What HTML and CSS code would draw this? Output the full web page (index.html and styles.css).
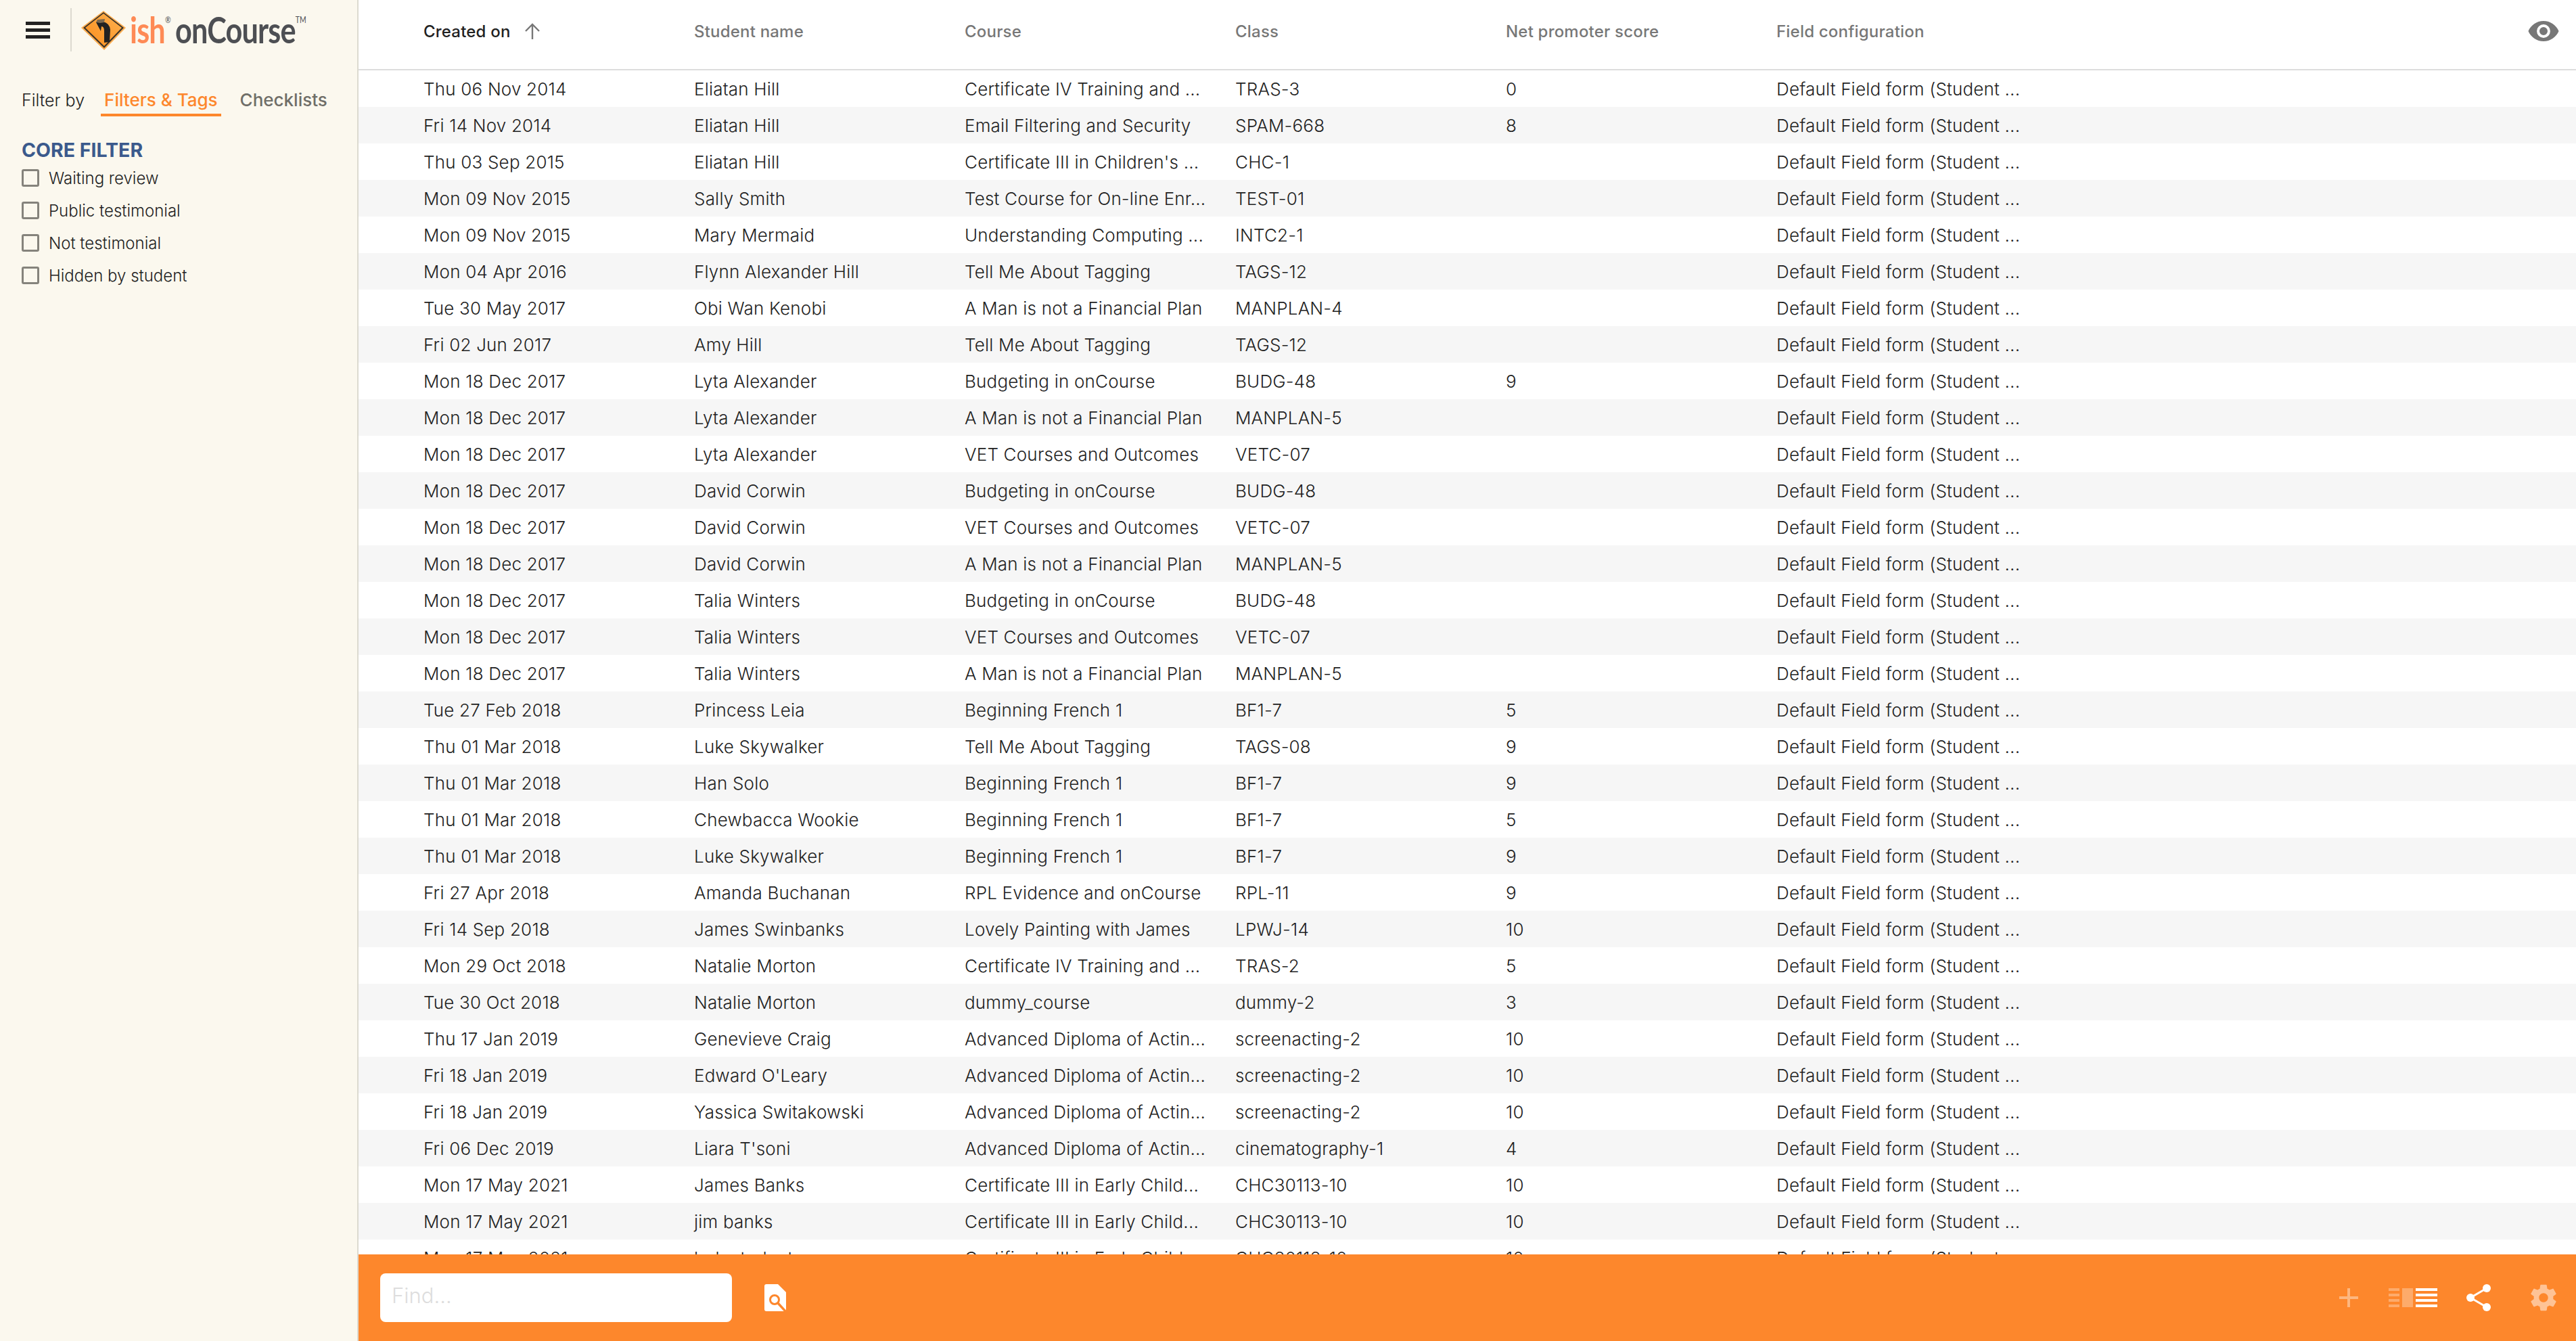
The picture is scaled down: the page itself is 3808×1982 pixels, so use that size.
FILE: index.html
```html
<!DOCTYPE html>
<html lang="en">
<head>
    <meta charset="UTF-8">
    <title>ish onCourse - Survey results</title>
    <link rel="stylesheet" href="styles.css">
</head>
<body>
    <aside class="sidebar">
        <div class="brand">
            <div class="burger"><span></span><span></span><span></span></div>
            <div class="brand-line"></div>
            <svg class="sign" viewBox="0 0 66 58">
                <defs>
                    <linearGradient id="signFill" x1="0" y1="1" x2="1" y2="0">
                        <stop offset="0" stop-color="#fb8f1e"/>
                        <stop offset="1" stop-color="#fdb04e"/>
                    </linearGradient>
                </defs>
                <path d="M33 0 L66 25 L34 58 L0 25 Z" fill="#fdae52"/>
                <path d="M33 2 L63 25 L34 55 L3 25 Z" fill="#3b3328"/>
                <path d="M33 4 L60 25 L34 52 L6 25 Z" fill="url(#signFill)"/>
                <path d="M22 17 L29 30 L30 23 Q34 23 34 30 L34 47 L42 46 L43 28 Q42 18 32 16 Z" fill="#222"/>
                <path d="M22 17 L24 13 L35 12 L34 17 L28 18 Z" fill="#7d6a50"/>
            </svg>
            <div class="wordmark">
                <span class="word-ish">ish</span><sup class="word-reg">®</sup>
                <span class="word-course">onCourse</span><sup class="word-tm">TM</sup>
            </div>
        </div>
        <div class="filter-tabs">
            <span class="filter-label">Filter by</span>
            <span class="tab tab-active">Filters &amp; Tags</span>
            <span class="tab">Checklists</span>
        </div>
        <div class="core-filter">
            <h2>CORE FILTER</h2>
            <label class="check"><i></i>Waiting review</label>
            <label class="check"><i></i>Public testimonial</label>
            <label class="check"><i></i>Not testimonial</label>
            <label class="check"><i></i>Hidden by student</label>
        </div>
    </aside>

    <main class="content">
        <div class="table-head row">
            <div class="cell sorted">Created on
                <svg class="sort-arrow" viewBox="0 0 24 24"><path d="M12 24 V2 M2 12 L12 2 L22 12" fill="none" stroke="#777" stroke-width="2.4"/></svg>
            </div>
            <div class="cell">Student name</div>
            <div class="cell">Course</div>
            <div class="cell">Class</div>
            <div class="cell">Net promoter score</div>
            <div class="cell">Field configuration</div>
            <svg class="eye" viewBox="0 0 24 16"><path fill-rule="evenodd" d="M12 0C6.5 0 2 3.300 0 8c2 4.700 6.500 8 12 8s10-3.300 12-8c-2-4.700-6.500-8-12-8zm0 13.300A5.300 5.300 0 1 1 12 2.700a5.300 5.300 0 0 1 0 10.600zM12 4.800a3.200 3.200 0 1 0 0 6.400 3.200 3.200 0 0 0 0-6.400z" fill="#777"/></svg>
        </div>

        <div class="table-body">
            <div class="row"><div class="cell">Thu 06 Nov 2014</div><div class="cell">Eliatan Hill</div><div class="cell">Certificate IV Training and ...</div><div class="cell">TRAS-3</div><div class="cell">0</div><div class="cell">Default Field form (Student ...</div></div>
            <div class="row"><div class="cell">Fri 14 Nov 2014</div><div class="cell">Eliatan Hill</div><div class="cell">Email Filtering and Security</div><div class="cell">SPAM-668</div><div class="cell">8</div><div class="cell">Default Field form (Student ...</div></div>
            <div class="row"><div class="cell">Thu 03 Sep 2015</div><div class="cell">Eliatan Hill</div><div class="cell">Certificate III in Children's ...</div><div class="cell">CHC-1</div><div class="cell"></div><div class="cell">Default Field form (Student ...</div></div>
            <div class="row"><div class="cell">Mon 09 Nov 2015</div><div class="cell">Sally Smith</div><div class="cell">Test Course for On-line Enr...</div><div class="cell">TEST-01</div><div class="cell"></div><div class="cell">Default Field form (Student ...</div></div>
            <div class="row"><div class="cell">Mon 09 Nov 2015</div><div class="cell">Mary Mermaid</div><div class="cell">Understanding Computing ...</div><div class="cell">INTC2-1</div><div class="cell"></div><div class="cell">Default Field form (Student ...</div></div>
            <div class="row"><div class="cell">Mon 04 Apr 2016</div><div class="cell">Flynn Alexander Hill</div><div class="cell">Tell Me About Tagging</div><div class="cell">TAGS-12</div><div class="cell"></div><div class="cell">Default Field form (Student ...</div></div>
            <div class="row"><div class="cell">Tue 30 May 2017</div><div class="cell">Obi Wan Kenobi</div><div class="cell">A Man is not a Financial Plan</div><div class="cell">MANPLAN-4</div><div class="cell"></div><div class="cell">Default Field form (Student ...</div></div>
            <div class="row"><div class="cell">Fri 02 Jun 2017</div><div class="cell">Amy Hill</div><div class="cell">Tell Me About Tagging</div><div class="cell">TAGS-12</div><div class="cell"></div><div class="cell">Default Field form (Student ...</div></div>
            <div class="row"><div class="cell">Mon 18 Dec 2017</div><div class="cell">Lyta Alexander</div><div class="cell">Budgeting in onCourse</div><div class="cell">BUDG-48</div><div class="cell">9</div><div class="cell">Default Field form (Student ...</div></div>
            <div class="row"><div class="cell">Mon 18 Dec 2017</div><div class="cell">Lyta Alexander</div><div class="cell">A Man is not a Financial Plan</div><div class="cell">MANPLAN-5</div><div class="cell"></div><div class="cell">Default Field form (Student ...</div></div>
            <div class="row"><div class="cell">Mon 18 Dec 2017</div><div class="cell">Lyta Alexander</div><div class="cell">VET Courses and Outcomes</div><div class="cell">VETC-07</div><div class="cell"></div><div class="cell">Default Field form (Student ...</div></div>
            <div class="row"><div class="cell">Mon 18 Dec 2017</div><div class="cell">David Corwin</div><div class="cell">Budgeting in onCourse</div><div class="cell">BUDG-48</div><div class="cell"></div><div class="cell">Default Field form (Student ...</div></div>
            <div class="row"><div class="cell">Mon 18 Dec 2017</div><div class="cell">David Corwin</div><div class="cell">VET Courses and Outcomes</div><div class="cell">VETC-07</div><div class="cell"></div><div class="cell">Default Field form (Student ...</div></div>
            <div class="row"><div class="cell">Mon 18 Dec 2017</div><div class="cell">David Corwin</div><div class="cell">A Man is not a Financial Plan</div><div class="cell">MANPLAN-5</div><div class="cell"></div><div class="cell">Default Field form (Student ...</div></div>
            <div class="row"><div class="cell">Mon 18 Dec 2017</div><div class="cell">Talia Winters</div><div class="cell">Budgeting in onCourse</div><div class="cell">BUDG-48</div><div class="cell"></div><div class="cell">Default Field form (Student ...</div></div>
            <div class="row"><div class="cell">Mon 18 Dec 2017</div><div class="cell">Talia Winters</div><div class="cell">VET Courses and Outcomes</div><div class="cell">VETC-07</div><div class="cell"></div><div class="cell">Default Field form (Student ...</div></div>
            <div class="row"><div class="cell">Mon 18 Dec 2017</div><div class="cell">Talia Winters</div><div class="cell">A Man is not a Financial Plan</div><div class="cell">MANPLAN-5</div><div class="cell"></div><div class="cell">Default Field form (Student ...</div></div>
            <div class="row"><div class="cell">Tue 27 Feb 2018</div><div class="cell">Princess Leia</div><div class="cell">Beginning French 1</div><div class="cell">BF1-7</div><div class="cell">5</div><div class="cell">Default Field form (Student ...</div></div>
            <div class="row"><div class="cell">Thu 01 Mar 2018</div><div class="cell">Luke Skywalker</div><div class="cell">Tell Me About Tagging</div><div class="cell">TAGS-08</div><div class="cell">9</div><div class="cell">Default Field form (Student ...</div></div>
            <div class="row"><div class="cell">Thu 01 Mar 2018</div><div class="cell">Han Solo</div><div class="cell">Beginning French 1</div><div class="cell">BF1-7</div><div class="cell">9</div><div class="cell">Default Field form (Student ...</div></div>
            <div class="row"><div class="cell">Thu 01 Mar 2018</div><div class="cell">Chewbacca Wookie</div><div class="cell">Beginning French 1</div><div class="cell">BF1-7</div><div class="cell">5</div><div class="cell">Default Field form (Student ...</div></div>
            <div class="row"><div class="cell">Thu 01 Mar 2018</div><div class="cell">Luke Skywalker</div><div class="cell">Beginning French 1</div><div class="cell">BF1-7</div><div class="cell">9</div><div class="cell">Default Field form (Student ...</div></div>
            <div class="row"><div class="cell">Fri 27 Apr 2018</div><div class="cell">Amanda Buchanan</div><div class="cell">RPL Evidence and onCourse</div><div class="cell">RPL-11</div><div class="cell">9</div><div class="cell">Default Field form (Student ...</div></div>
            <div class="row"><div class="cell">Fri 14 Sep 2018</div><div class="cell">James Swinbanks</div><div class="cell">Lovely Painting with James</div><div class="cell">LPWJ-14</div><div class="cell">10</div><div class="cell">Default Field form (Student ...</div></div>
            <div class="row"><div class="cell">Mon 29 Oct 2018</div><div class="cell">Natalie Morton</div><div class="cell">Certificate IV Training and ...</div><div class="cell">TRAS-2</div><div class="cell">5</div><div class="cell">Default Field form (Student ...</div></div>
            <div class="row"><div class="cell">Tue 30 Oct 2018</div><div class="cell">Natalie Morton</div><div class="cell">dummy_course</div><div class="cell">dummy-2</div><div class="cell">3</div><div class="cell">Default Field form (Student ...</div></div>
            <div class="row"><div class="cell">Thu 17 Jan 2019</div><div class="cell">Genevieve Craig</div><div class="cell">Advanced Diploma of Actin...</div><div class="cell">screenacting-2</div><div class="cell">10</div><div class="cell">Default Field form (Student ...</div></div>
            <div class="row"><div class="cell">Fri 18 Jan 2019</div><div class="cell">Edward O'Leary</div><div class="cell">Advanced Diploma of Actin...</div><div class="cell">screenacting-2</div><div class="cell">10</div><div class="cell">Default Field form (Student ...</div></div>
            <div class="row"><div class="cell">Fri 18 Jan 2019</div><div class="cell">Yassica Switakowski</div><div class="cell">Advanced Diploma of Actin...</div><div class="cell">screenacting-2</div><div class="cell">10</div><div class="cell">Default Field form (Student ...</div></div>
            <div class="row"><div class="cell">Fri 06 Dec 2019</div><div class="cell">Liara T'soni</div><div class="cell">Advanced Diploma of Actin...</div><div class="cell">cinematography-1</div><div class="cell">4</div><div class="cell">Default Field form (Student ...</div></div>
            <div class="row"><div class="cell">Mon 17 May 2021</div><div class="cell">James Banks</div><div class="cell">Certificate III in Early Child...</div><div class="cell">CHC30113-10</div><div class="cell">10</div><div class="cell">Default Field form (Student ...</div></div>
            <div class="row"><div class="cell">Mon 17 May 2021</div><div class="cell">jim banks</div><div class="cell">Certificate III in Early Child...</div><div class="cell">CHC30113-10</div><div class="cell">10</div><div class="cell">Default Field form (Student ...</div></div>
            <div class="row"><div class="cell">Mon 17 May 2021</div><div class="cell">bob student</div><div class="cell">Certificate III in Early Child...</div><div class="cell">CHC30113-10</div><div class="cell">10</div><div class="cell">Default Field form (Student ...</div></div>
        </div>

        <div class="bottom-bar">
            <div class="find-box">Find...</div>
            <svg class="find-icon" viewBox="0 0 32 40">
                <path d="M3 0 H20 L32 12 V37 Q32 40 29 40 H3 Q0 40 0 37 V3 Q0 0 3 0 Z" fill="#fff"/>
                <circle cx="15" cy="23" r="6.500" fill="none" stroke="#fd872c" stroke-width="3"/>
                <path d="M20 28 L32 41" fill="none" stroke="#fd872c" stroke-width="3.500"/>
            </svg>
            <div class="bar-actions">
                <svg class="act-plus" viewBox="0 0 28 28"><path d="M12 0h4v12h12v4H16v12h-4V16H0v-4h12z" fill="#fff"/></svg>
                <div class="act-views">
                    <div class="view-lines dim"><span></span><span></span><span></span><span></span></div>
                    <div class="view-block"></div>
                    <div class="view-lines"><span></span><span></span><span></span><span></span></div>
                </div>
                <svg class="act-share" viewBox="0 0 36 40">
                    <path d="M30 6 L6 20 L30 34" fill="none" stroke="#fff" stroke-width="3"/>
                    <circle cx="30" cy="6" r="6" fill="#fff"/>
                    <circle cx="6" cy="20" r="6" fill="#fff"/>
                    <circle cx="30" cy="34" r="6" fill="#fff"/>
                </svg>
                <svg class="act-gear" viewBox="0 0 24 24"><path d="M19.430 12.980c.04-.320.070-.640.070-.980s-.030-.660-.070-.980l2.110-1.650c.190-.150.240-.420.120-.640l-2-3.460c-.120-.220-.390-.300-.610-.220l-2.490 1c-.520-.400-1.080-.730-1.690-.980l-.380-2.650C14.460 2.180 14.250 2 14 2h-4c-.250 0-.460.180-.490.420l-.380 2.650c-.610.250-1.170.590-1.690.980l-2.490-1c-.230-.090-.490 0-.610.220l-2 3.460c-.130.220-.070.490.120.640l2.110 1.650c-.040.320-.070.650-.070.980s.030.660.070.980l-2.110 1.650c-.190.150-.240.420-.120.640l2 3.460c.120.220.390.300.610.220l2.490-1c.520.400 1.080.730 1.690.980l.380 2.650c.030.240.240.420.490.420h4c.250 0 .460-.180.490-.420l.380-2.650c.610-.250 1.170-.590 1.690-.980l2.490 1c.230.090.490 0 .610-.220l2-3.460c.120-.220.070-.490-.120-.640l-2.110-1.650zM12 15.500c-1.930 0-3.500-1.570-3.500-3.500s1.570-3.500 3.500-3.500 3.500 1.570 3.500 3.500-1.570 3.500-3.500 3.500z" fill="#fff"/></svg>
            </div>
        </div>
    </main>
</body>
</html>
```

FILE: styles.css
```css
:root {
    --orange: #fd872c;
    --cream: #fbf8ee;
    --ink: #222;
    --muted: #777;
    --navy: #3b5a8c;
}

* {
    margin: 0;
    padding: 0;
    box-sizing: border-box;
}

body {
    font-family: 'Inter', 'Liberation Sans', sans-serif;
    color: var(--ink);
    background: #fff;
    height: 100vh;
    display: flex;
    overflow: hidden;
}

/* sidebar */

.sidebar {
    width: 530px;
    flex-shrink: 0;
    background: var(--cream);
    border-right: 2px solid #dcdad0;
    padding-top: 12px;
}

.brand {
    display: flex;
    align-items: center;
    height: 64px;
    padding-left: 38px;
}

.burger {
    width: 36px;
    display: flex;
    flex-direction: column;
    gap: 5px;
}

.burger span {
    height: 5px;
    background: var(--ink);
}

.brand-line {
    width: 2px;
    height: 64px;
    background: #dcdad0;
    margin: 0 14px 0 30px;
}

.sign {
    width: 66px;
    height: 58px;
    margin-top: 2px;
}

/* the logo face is condensed, Lato squeezed comes closest */
.wordmark {
    display: flex;
    align-items: flex-start;
    margin-left: 6px;
    height: 52px;
    line-height: 52px;
    font-family: 'Lato', sans-serif;
    font-weight: 700;
    font-size: 54px;
    letter-spacing: -1px;
    white-space: nowrap;
    transform: scaleX(0.8);
    transform-origin: left center;
}

.word-ish {
    color: #fe8a55;
}

.word-course {
    color: #4d4f53;
    margin-left: 8px;
}

.word-reg,
.word-tm {
    font-size: 13px;
    line-height: 14px;
    margin-top: 4px;
    letter-spacing: 0;
    font-weight: 400;
    color: #4d4f53;
}

.filter-tabs {
    display: flex;
    align-items: center;
    height: 40px;
    margin-top: 52px;
    padding-left: 32px;
    font-size: 25px;
}

.filter-label {
    font-weight: 300;
    margin-right: 21px;
}

.tab {
    font-size: 26px;
    font-weight: 500;
    color: #6f6e68;
    padding: 0 8px;
    margin-right: 17px;
    line-height: 40px;
}

.tab-active {
    color: var(--orange);
    box-shadow: 0 7px 0 -3px var(--orange);
}

.core-filter {
    padding: 36px 0 0 32px;
}

.core-filter h2 {
    font-size: 28.500px;
    font-weight: 700;
    line-height: 35px;
    color: var(--navy);
}

.check {
    display: flex;
    align-items: center;
    gap: 14px;
    height: 48px;
    font-size: 24px;
    font-weight: 300;
}

.check i {
    width: 26px;
    height: 26px;
    border: 3px solid #85837c;
    border-radius: 3px;
}

/* table */

.content {
    flex: 1;
    min-width: 0;
    display: flex;
    flex-direction: column;
    position: relative;
}

.row {
    display: grid;
    grid-template-columns: repeat(6, 400px);
    align-items: center;
    height: 54px;
    padding-left: 96px;
    font-size: 26px;
    font-weight: 300;
    letter-spacing: 0.200px;
}

.table-head {
    height: 104px;
    flex-shrink: 0;
    border-bottom: 2px solid #ddd;
    padding-bottom: 10px;
    font-size: 24px;
    font-weight: 500;
    color: var(--muted);
    position: relative;
}

.sorted {
    color: var(--ink);
    display: flex;
    align-items: center;
    gap: 20px;
}

.sort-arrow {
    width: 24px;
    height: 24px;
}

.eye {
    position: absolute;
    right: 25px;
    top: 31px;
    width: 46px;
    height: 30px;
}

.table-body {
    flex: 1;
    min-height: 0;
    overflow: hidden;
}

.table-body .row:nth-child(even) {
    background: #f6f6f6;
}

.cell {
    white-space: nowrap;
}

/* bottom bar */

.bottom-bar {
    height: 128px;
    flex-shrink: 0;
    background: var(--orange);
    display: flex;
    align-items: center;
    padding: 0 25px 0 32px;
}

.find-box {
    width: 520px;
    height: 72px;
    background: #fff;
    border-radius: 8px;
    padding-left: 17px;
    line-height: 66px;
    font-size: 31px;
    font-weight: 300;
    color: #ddd;
}

.find-icon {
    width: 32px;
    height: 40px;
    margin-left: 48px;
}

.bar-actions {
    margin-left: auto;
    display: flex;
    align-items: center;
}

.act-plus {
    width: 28px;
    height: 28px;
    opacity: 0.4;
}

.act-views {
    display: flex;
    gap: 4px;
    margin-left: 45px;
}

.view-lines {
    width: 32px;
    height: 28px;
    display: flex;
    flex-direction: column;
    justify-content: space-between;
}

.view-lines span {
    height: 4px;
    background: #fff;
}

.view-lines.dim {
    width: 16px;
    opacity: 0.3;
}

.view-block {
    width: 16px;
    height: 28px;
    background: #fff;
    opacity: 0.3;
}

.act-share {
    width: 36px;
    height: 40px;
    margin-left: 43px;
}

.act-gear {
    width: 46px;
    height: 46px;
    margin-left: 55px;
    opacity: 0.5;
}
```
